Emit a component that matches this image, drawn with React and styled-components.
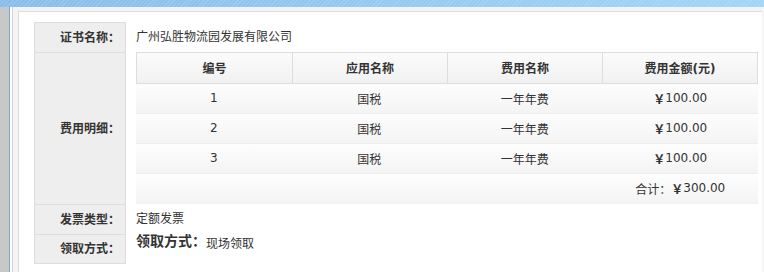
import styled, { createGlobalStyle } from 'styled-components';

const GlobalStyle = createGlobalStyle`
    html, body {
        margin: 0;
        padding: 0;
        background: #ffffff;
    }

    body {
        font-family: "DejaVu Sans", "Noto Sans CJK SC", sans-serif;
        font-size: 12px;
        color: #333333;
    }
`;

const fees = [
    { no: 1, app: '国税', name: '一年年费', amount: '100.00' },
    { no: 2, app: '国税', name: '一年年费', amount: '100.00' },
    { no: 3, app: '国税', name: '一年年费', amount: '100.00' },
];

const App = () => {
    return (
        <Page>
            <GlobalStyle />
            <TopBar />
            <Body>
                <Rail />
                <RailEdge />
                <Gutter />
                <Main>
                    <Panel>
                        <InfoTable>
                            <Label>证书名称：</Label>
                            <Value>广州弘胜物流园发展有限公司</Value>

                            <Label>费用明细：</Label>
                            <Value $flush>
                                <FeeTable>
                                    <HeadRow>
                                        <HeadCell>编号</HeadCell>
                                        <HeadCell>应用名称</HeadCell>
                                        <HeadCell>费用名称</HeadCell>
                                        <HeadCell>费用金额(元)</HeadCell>
                                    </HeadRow>
                                    {fees.map((fee) => (
                                        <FeeRow key={fee.no}>
                                            <FeeCell>{fee.no}</FeeCell>
                                            <FeeCell>{fee.app}</FeeCell>
                                            <FeeCell>{fee.name}</FeeCell>
                                            <FeeCell>
                                                <Yen>￥</Yen>{fee.amount}
                                            </FeeCell>
                                        </FeeRow>
                                    ))}
                                    <FeeRow $total>
                                        <FeeCell />
                                        <FeeCell />
                                        <FeeCell />
                                        <FeeCell>
                                            合计：<Yen>￥</Yen>300.00
                                        </FeeCell>
                                    </FeeRow>
                                </FeeTable>
                            </Value>

                            <Label>发票类型：</Label>
                            <Value>定额发票</Value>

                            <Label $last>领取方式：</Label>
                            <Value $top>
                                <Strong>领取方式：</Strong>现场领取
                            </Value>
                        </InfoTable>
                    </Panel>
                </Main>
            </Body>
        </Page>
    );
};

export default App;

const Page = styled.div`
    display: flex;
    flex-direction: column;
    width: 764px;
    height: 272px;
    overflow: hidden;
`;

const TopBar = styled.div`
    height: 7px;
    flex-shrink: 0;
    background:
        repeating-linear-gradient(135deg, rgba(255, 255, 255, 0.12) 0 1px, transparent 1px 3px),
        linear-gradient(90deg, #8abde8, #a3d5f6);
`;

const Body = styled.div`
    flex: 1;
    display: flex;
`;

const Rail = styled.div`
    width: 9px;
    background: #c8c8c8;
`;

const RailEdge = styled.div`
    width: 1px;
    background: #7ea9d8;
`;

const Gutter = styled.div`
    width: 2px;
    background: #ffffff;
    border-right: 1px solid #d6d6d6;
`;

const Main = styled.div`
    flex: 1;
    display: flex;
    background: #f4f4f4;
    padding: 4px 2px 0 5px;
`;

const Panel = styled.div`
    flex: 1;
    background: #ffffff;
    border-top: 1px solid #dcdcdc;
    border-left: 1px solid #dcdcdc;
    padding: 10px 0 0 15px;
`;

const InfoTable = styled.div`
    display: grid;
    grid-template-columns: 92px 1fr;
`;

const Label = styled.div`
    box-sizing: border-box;
    display: flex;
    align-items: center;
    justify-content: flex-end;
    min-height: 30px;
    padding: 0 5px 3px 0;
    background: #eeeeee;
    border: 1px solid #dddddd;
    border-bottom: ${(p) => (p.$last ? '1px solid #dddddd' : 'none')};
    font-weight: bold;
    color: #333333;
`;

const Value = styled.div`
    display: flex;
    align-items: ${(p) => (p.$top ? 'flex-start' : 'center')};
    padding: ${(p) => (p.$flush ? '0 4px 0 10px' : p.$top ? '0 0 0 10px' : '0 0 3px 10px')};
    color: #333333;
`;

const Strong = styled.span`
    font-size: 14px;
    font-weight: bold;
    line-height: 15px;
`;

const FeeTable = styled.div`
    flex: 1;
    display: flex;
    flex-direction: column;
`;

const HeadRow = styled.div`
    display: grid;
    grid-template-columns: repeat(4, 1fr);
    border: 1px solid #dddddd;
    background: linear-gradient(#fbfbfb, #f1f1f1);
`;

const HeadCell = styled.div`
    box-sizing: border-box;
    height: 30px;
    display: flex;
    align-items: center;
    justify-content: center;
    padding-bottom: 2px;
    font-weight: bold;
    color: #333333;

    & + & {
        border-left: 1px solid #dddddd;
    }
`;

const FeeRow = styled.div`
    box-sizing: border-box;
    display: grid;
    grid-template-columns: repeat(4, 1fr);
    height: 30px;
    background: linear-gradient(#fdfdfd, #f4f4f4);
    border-bottom: 1px solid ${(p) => (p.$total ? '#f1f1f1' : '#eeeeee')};
`;

const FeeCell = styled.div`
    display: flex;
    align-items: center;
    justify-content: center;
    padding-bottom: 1px;
    color: #333333;
`;

const Yen = styled.span`
    font-family: "Noto Sans CJK SC", sans-serif;
    font-weight: bold;
`;
